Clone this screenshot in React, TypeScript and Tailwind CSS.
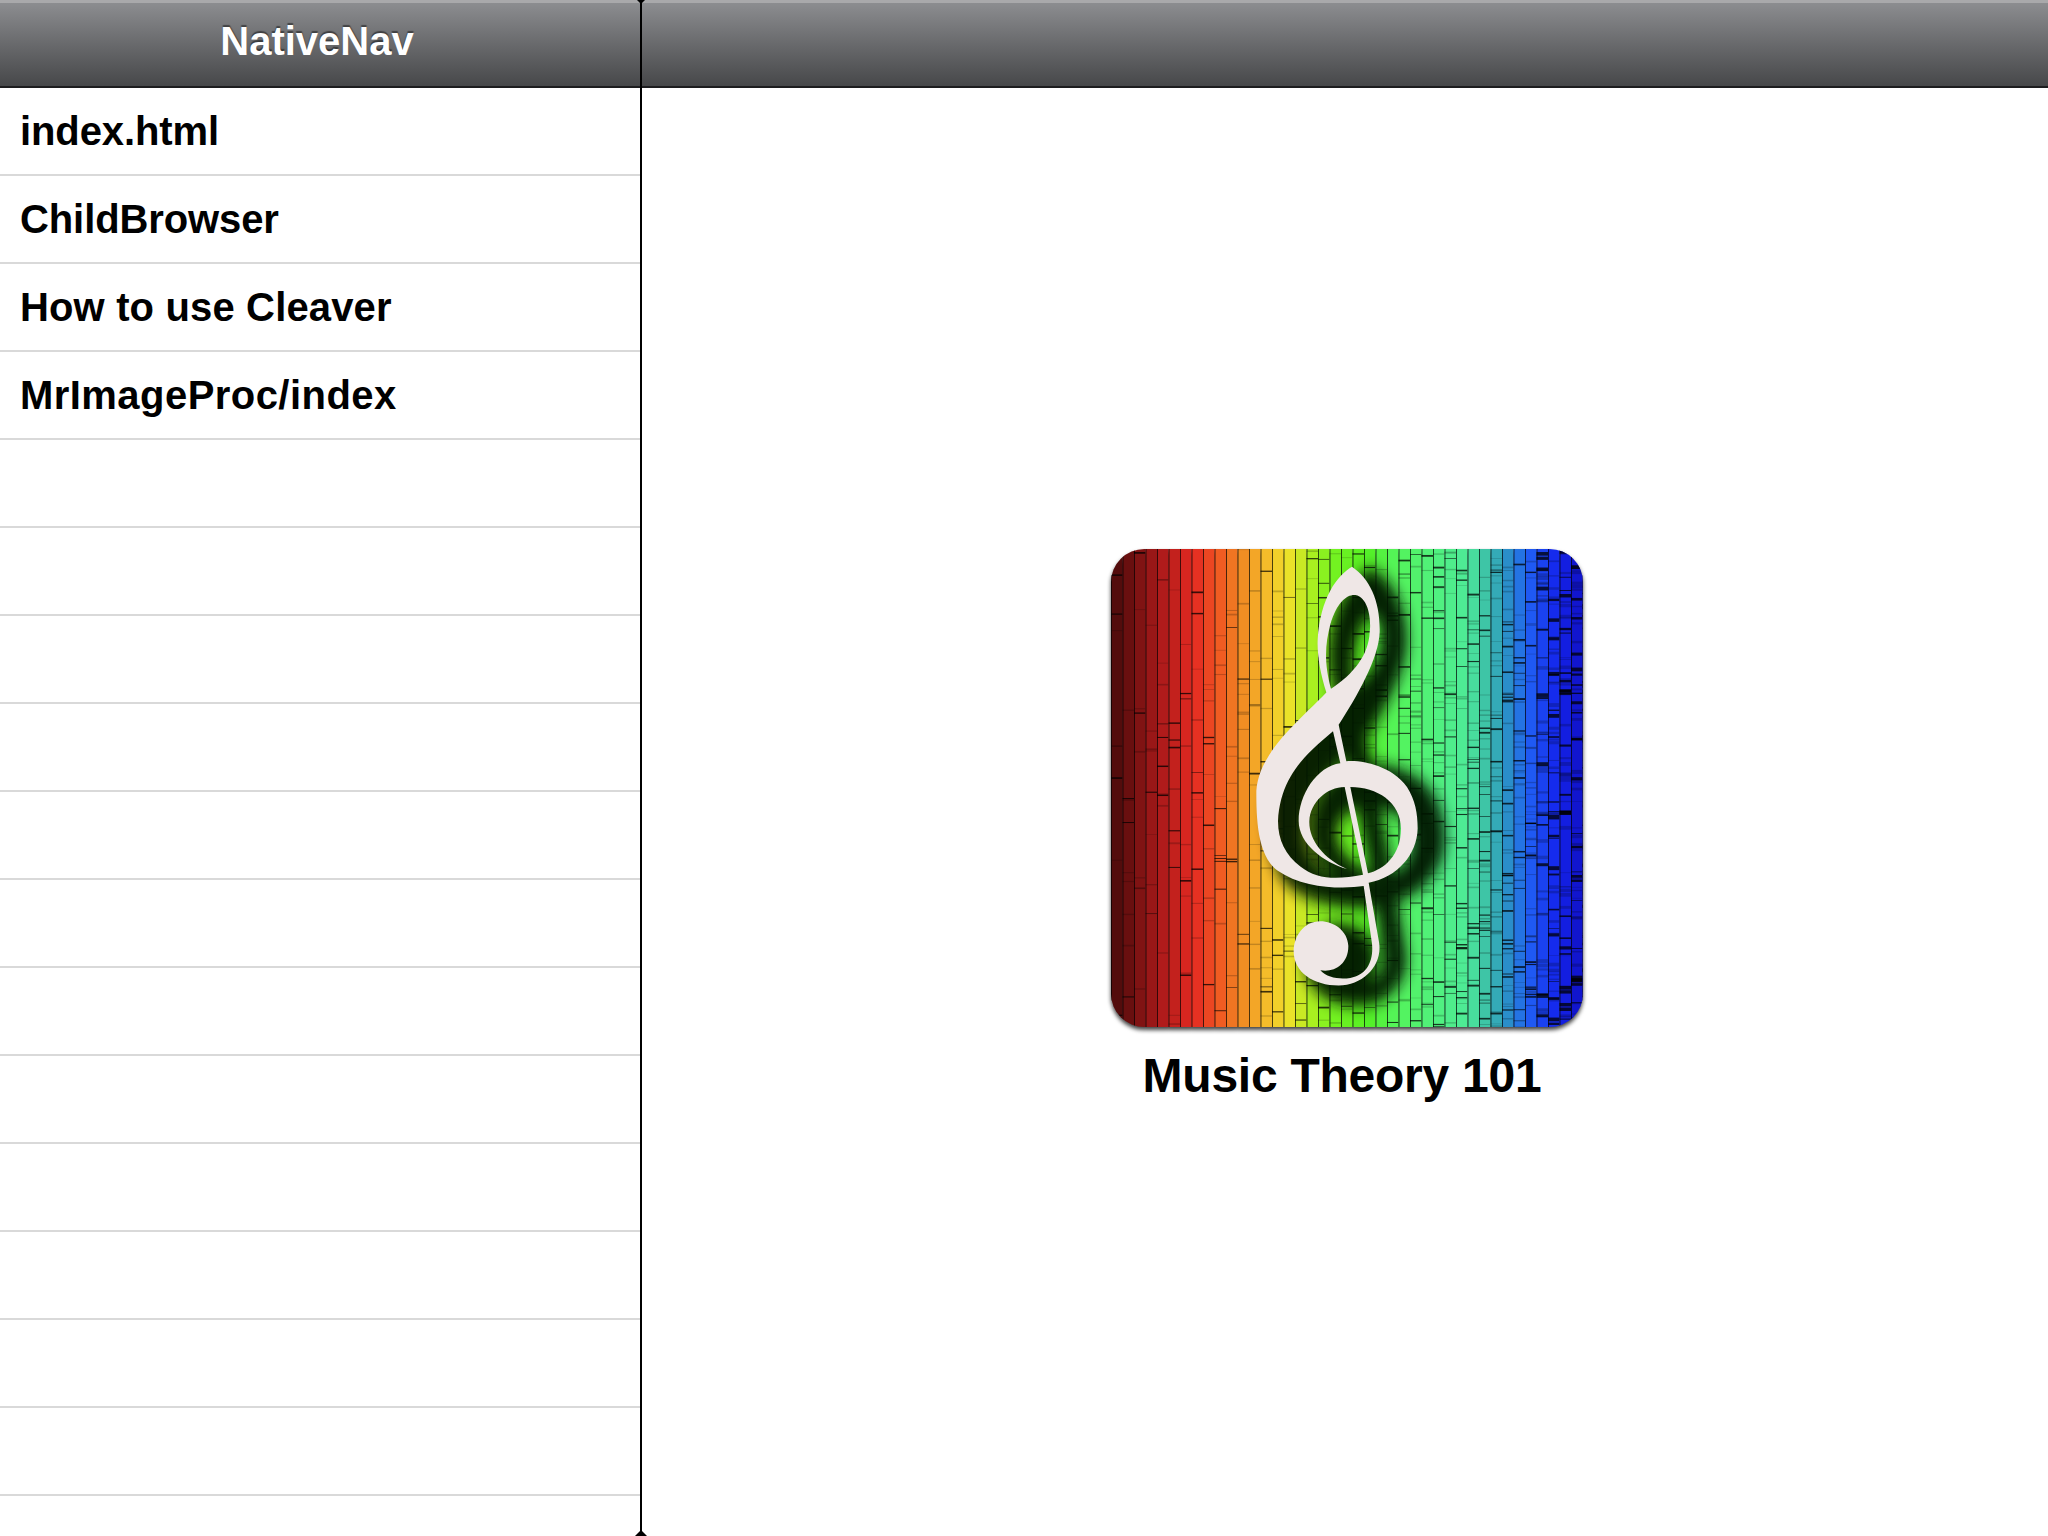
const rows = [
  { label: 'index.html', className: 'tracking-[-0.1px]' },
  { label: 'ChildBrowser', className: 'tracking-[-0.1px]' },
  { label: 'How to use Cleaver', className: 'tracking-[0.15px]' },
  { label: 'MrImageProc/index', className: 'tracking-[0.45px]' },
];
const emptyRows = Array.from({ length: 13 }, (_, i) => i);

const stops: [number, number[]][] = [
  [62, [72, 10, 10]], [140, [122, 18, 18]], [210, [172, 26, 26]], [310, [228, 42, 34]],
  [380, [240, 85, 34]], [450, [240, 136, 34]], [520, [245, 184, 42]], [590, [240, 224, 42]],
  [660, [174, 240, 32]], [720, [120, 242, 32]], [830, [84, 240, 36]], [900, [84, 244, 84]],
  [1040, [80, 240, 128]], [1130, [78, 234, 152]], [1190, [60, 192, 168]], [1250, [42, 144, 200]],
  [1310, [32, 96, 244]], [1400, [20, 36, 236]], [1480, [16, 16, 196]],
];

const colorAt = (x: number) => {
  for (let i = 1; i < stops.length; i++) {
    if (x <= stops[i][0]) {
      const [x0, c0] = stops[i - 1];
      const [x1, c1] = stops[i];
      const t = (x - x0) / (x1 - x0);
      return `rgb(${c0.map((v, k) => Math.round(v + (c1[k] - v) * t)).join(',')})`;
    }
  }
  return 'rgb(16,16,196)';
};

// small seeded generator so the bars stay the same on every render
let seed = 1234;
const rand = () => {
  seed = (seed * 16807) % 2147483647;
  return seed / 2147483647;
};

const BAR = 34.5;
const bars = Array.from({ length: 42 }, (_, i) => {
  const x = 62 + i * BAR;
  const density = 9 + (i / 41) * (i / 41) * 60;
  const lines = Array.from({ length: Math.round(density) }, () => ({
    y: 50 + rand() * 1265,
    h: 1.5 + rand() * (i > 36 ? 9 : 3.5),
    o: rand() < 0.35 ? 0.75 : 0.2,
  }));
  return { x, color: colorAt(x + BAR / 2), lines };
});

const clefPath =
  'M785 97 C840 130 870 190 868 270 C865 340 800 440 745 515 L768 612 ' +
  'C800 608 900 618 950 680 C975 715 982 750 982 790 C980 860 920 920 835 933 ' +
  'L866 1090 C878 1150 820 1205 745 1205 C670 1205 610 1170 610 1115 C610 1075 640 1035 690 1035 ' +
  'C730 1035 772 1060 774 1100 C775 1150 730 1172 690 1165 C710 1185 750 1190 780 1185 C830 1178 850 1140 845 1095 ' +
  'L820 942 C760 950 640 950 560 900 C500 860 498 760 498 690 C505 590 620 510 708 430 ' +
  'C690 380 680 330 682 290 C690 180 740 120 785 97 Z ' +
  'M722 420 C700 350 705 300 720 250 C740 190 770 170 795 172 C840 180 842 250 838 270 C835 330 790 380 722 420 Z ' +
  'M728 532 L750 617 C680 625 625 700 625 770 C625 830 700 880 770 897 C700 870 655 820 657 770 ' +
  'C660 720 710 680 763 680 L818 912 C740 925 680 925 630 890 C585 860 563 820 563 770 C570 650 650 590 728 532 Z ' +
  'M780 680 C860 680 932 720 932 790 C932 860 880 900 833 908 Z';

function MusicIcon() {
  return (
    <svg
      viewBox="62 50 1416 1265"
      preserveAspectRatio="none"
      className="w-[472px] h-[478px] [filter:drop-shadow(0_3px_2px_rgba(0,0,0,0.75))]"
    >
      <defs>
        <clipPath id="iconClip">
          <rect x="62" y="50" width="1416" height="1265" rx="100" ry="88" />
        </clipPath>
        <filter id="clefBlur" x="-30%" y="-30%" width="160%" height="160%">
          <feGaussianBlur stdDeviation="20" />
        </filter>
      </defs>
      <g clipPath="url(#iconClip)">
        {bars.map((bar) => (
          <g key={bar.x}>
            <rect x={bar.x} y="50" width={BAR + 0.5} height="1265" fill={bar.color} />
            {bar.lines.map((line, i) => (
              <rect key={i} x={bar.x} y={line.y} width={BAR} height={line.h} fill="#000" opacity={line.o} />
            ))}
            <rect x={bar.x} y="50" width="3" height="1265" fill="#000" opacity="0.7" />
          </g>
        ))}
        <path
          d={clefPath}
          fill="#001200"
          stroke="#001200"
          strokeWidth="48"
          fillRule="evenodd"
          opacity="0.95"
          transform="translate(58 30)"
          filter="url(#clefBlur)"
        />
        <path d={clefPath} fill="#efe7e6" fillRule="evenodd" />
      </g>
    </svg>
  );
}

function Header({ title }: { title?: string }) {
  return (
    <div className="h-[88px] shrink-0 flex items-center justify-center border-t-[3px] border-t-[#a9a9ab] border-b-2 border-b-[#1d1d1f] bg-gradient-to-b from-[#8c8d90] to-[#47484a]">
      {title && (
        <span className="-translate-x-[3px] -translate-y-[4px] text-[40px] font-bold text-white [text-shadow:0_-2px_1px_rgba(0,0,0,0.45)]">{title}</span>
      )}
    </div>
  );
}

export default function App() {
  return (
    <div className="relative flex h-[1536px] w-[2048px] overflow-hidden bg-white font-['Liberation_Sans',Arial,sans-serif]">
      {/* Left nav */}
      <div className="flex w-[642px] shrink-0 flex-col border-r-2 border-black">
        <Header title="NativeNav" />
        {rows.map((row) => (
          <div key={row.label} className={`flex h-[88px] shrink-0 items-center border-b-2 border-[#d9d9d9] pl-5 text-[40px] font-bold text-black ${row.className}`}>
            {row.label}
          </div>
        ))}
        {emptyRows.map((i) => (
          <div key={i} className="h-[88px] shrink-0 border-b-2 border-[#d9d9d9]" />
        ))}
      </div>

      {/* Main pane */}
      <div className="flex flex-1 flex-col">
        <Header />
        <div className="flex flex-col items-center pt-[461px]">
          <div className="ml-[4px]">
            <MusicIcon />
          </div>
          <div className="mt-[21px] mr-[6px] text-[48px] leading-[56px] font-bold tracking-[-0.25px] text-black">Music Theory 101</div>
        </div>
      </div>

      {/* divider nubs */}
      <div className="absolute left-[637px] top-0 h-0 w-0 border-x-[4px] border-t-[4px] border-x-transparent border-t-black" />
      <div className="absolute left-[635px] bottom-0 h-0 w-0 border-x-[6px] border-b-[6px] border-x-transparent border-b-black" />
    </div>
  );
}
